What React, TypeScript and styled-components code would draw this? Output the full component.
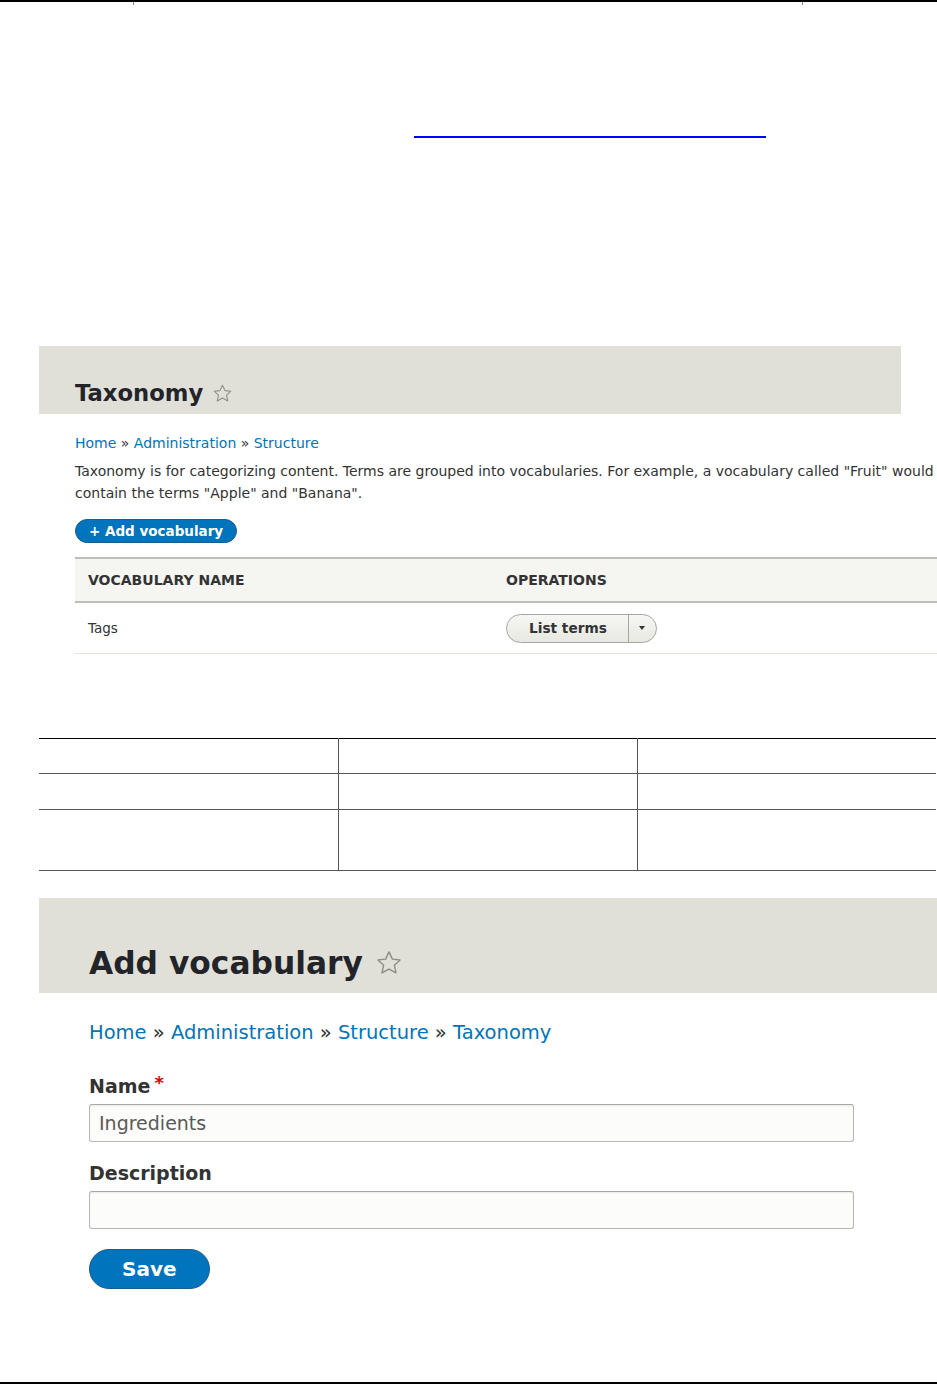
import React from 'react';
import styled, { createGlobalStyle } from 'styled-components';

const GlobalStyle = createGlobalStyle`
  html, body {
    margin: 0;
    padding: 0;
    background: #fff;
    overflow-x: hidden;
  }
  body {
    font-family: "DejaVu Sans", "Liberation Sans", sans-serif;
    color: #333;
  }
`;

const Page = styled.div`
  width: 937px;
  min-height: 1384px;
  display: flex;
  flex-direction: column;
  overflow: hidden;
`;

// leftover header row of the document page
const HeadRule = styled.div`
  display: grid;
  grid-template-columns: 133px 669px 1fr;
  height: 3px;
  border-top: 2px solid #000;
`;

const HeadCell = styled.div<{ $tick?: boolean }>`
  border-left: ${(p) => (p.$tick ? '1px solid #888' : 'none')};
`;

const DocLink = styled.a`
  display: block;
  width: 352px;
  height: 0;
  margin: 131px 0 0 414px;
  border-bottom: 2px solid #0000ff;
`;

// screenshot wrapper
const Shot = styled.section<{ $top: number }>`
  margin-top: ${(p) => p.$top}px;
  margin-left: 39px;
  width: 940px;
`;

const TitleBand = styled.div<{ $big?: boolean }>`
  width: ${(p) => (p.$big ? '898px' : '862px')};
  box-sizing: border-box;
  background: #e0e0d8;
  padding: ${(p) => (p.$big ? '48px 50px 13px' : '34px 36px 8px')};
  display: flex;
  align-items: center;
`;

const Title = styled.h1<{ $big?: boolean }>`
  margin: 0;
  font-size: ${(p) => (p.$big ? '31.3px' : '22.7px')};
  line-height: ${(p) => (p.$big ? '34px' : '26px')};
  font-weight: bold;
  color: #232429;
`;

const Star = ({ size }: { size: number }) => (
  <svg
    width={size}
    height={size}
    viewBox="0 0 24 24"
    fill="none"
    stroke="#8e8e86"
    strokeWidth="1.2"
    strokeLinejoin="round"
    style={{ marginLeft: size * 0.42 }}
  >
    <path d="M12 2.5l2.9 6.2 6.6.7-4.9 4.5 1.4 6.6L12 17.2l-6 3.3 1.4-6.6-4.9-4.5 6.6-.7z" />
  </svg>
);

const Body = styled.div<{ $pad: number }>`
  padding-left: ${(p) => p.$pad}px;
`;

const Crumbs = styled.nav<{ $big?: boolean }>`
  margin-top: ${(p) => (p.$big ? '27px' : '19px')};
  font-size: ${(p) => (p.$big ? '19.5px' : '14px')};
  line-height: ${(p) => (p.$big ? '26px' : '20px')};
  color: #333;
  a {
    color: #0074bd;
    text-decoration: none;
  }
`;

const Help = styled.p`
  margin: 7px 0 0;
  width: 870px;
  font-size: 14px;
  line-height: 22px;
  color: #333;
`;

const ButtonRow = styled.div`
  margin-top: 15px;
`;

const PillButton = styled.button<{ $big?: boolean }>`
  display: inline-flex;
  align-items: center;
  justify-content: center;
  box-sizing: border-box;
  height: ${(p) => (p.$big ? '40px' : '24px')};
  padding: ${(p) => (p.$big ? '0 32px' : '0 13px')};
  border: 1px solid #1e5c90;
  border-radius: 20px;
  background: #0074bd;
  color: #fff;
  font-family: inherit;
  font-weight: bold;
  font-size: ${(p) => (p.$big ? '20px' : '13.5px')};
  cursor: pointer;
`;

const ListTable = styled.table`
  margin-top: 14px;
  width: 900px;
  border-collapse: collapse;
  table-layout: fixed;
  font-size: 14px;
  th {
    box-sizing: border-box;
    background: #f5f5f2;
    border-top: 2px solid #bfbfba;
    border-bottom: 2px solid #bfbfba;
    height: 44px;
    padding: 0 13px;
    text-align: left;
    text-transform: uppercase;
    font-size: 14px;
    color: #333;
  }
  th:first-child {
    width: 418px;
  }
  td {
    height: 50px;
    padding: 0 13px;
    border-bottom: 1px solid #e6e4df;
    color: #333;
  }
  td:first-child {
    font-size: 13.5px;
  }
`;

const SplitButton = styled.div`
  display: inline-flex;
  box-sizing: border-box;
  height: 29px;
  border: 1px solid #a6a6a6;
  border-radius: 15px;
  background: linear-gradient(#f6f6f3, #e8e8e2);
  overflow: hidden;
`;

const SplitMain = styled.span`
  display: flex;
  align-items: center;
  padding: 0 21px 0 22px;
  font-weight: bold;
  font-size: 13.7px;
  color: #333;
  border-right: 1px solid #a6a6a6;
`;

const SplitToggle = styled.span`
  display: flex;
  align-items: center;
  justify-content: center;
  width: 27px;
  &::after {
    content: '';
    border-left: 3.5px solid transparent;
    border-right: 3.5px solid transparent;
    border-top: 4px solid #333;
  }
`;

// empty table on the document page
const BlankGrid = styled.table`
  margin: 84px 0 0 39px;
  width: 897px;
  border-collapse: collapse;
  table-layout: fixed;
  border-top: 1px solid #000;
  td {
    border-bottom: 1px solid #555;
    border-left: 1px solid #555;
    padding: 0;
  }
  td:first-child {
    border-left: none;
  }
`;

const BlankRow = styled.tr<{ $h: number }>`
  height: ${(p) => p.$h}px;
`;

const Field = styled.div<{ $top: number }>`
  margin-top: ${(p) => p.$top}px;
  display: flex;
  flex-direction: column;
`;

const Label = styled.label`
  font-weight: bold;
  font-size: 19px;
  line-height: 24px;
  color: #333;
  span {
    color: #e00;
    margin-left: 4px;
    vertical-align: top;
    font-size: 18px;
    line-height: 18px;
  }
`;

const TextInput = styled.input`
  margin-top: 6px;
  width: 765px;
  height: 38px;
  box-sizing: border-box;
  padding: 0 9px;
  border: 1px solid #b8b8b8;
  border-top-color: #a8a8a8;
  border-radius: 3px;
  background: #fcfcfa;
  box-shadow: inset 0 1px 2px rgba(0, 0, 0, 0.08);
  font-family: inherit;
  font-size: 19px;
  color: #595959;
`;

const Actions = styled.div`
  margin-top: 20px;
`;

const FootRule = styled.div`
  margin-top: auto;
  border-bottom: 2px solid #000;
`;

export default function App() {
  return (
    <Page>
      <GlobalStyle />
      <HeadRule>
        <HeadCell />
        <HeadCell $tick />
        <HeadCell $tick />
      </HeadRule>
      <DocLink href="#" aria-label="link" />

      <Shot $top={208}>
        <TitleBand>
          <Title>Taxonomy</Title>
          <Star size={21} />
        </TitleBand>
        <Body $pad={36}>
          <Crumbs>
            <a href="#">Home</a> » <a href="#">Administration</a> » <a href="#">Structure</a>
          </Crumbs>
          <Help>
            Taxonomy is for categorizing content. Terms are grouped into vocabularies. For example, a
            vocabulary called "Fruit" would contain the terms "Apple" and "Banana".
          </Help>
          <ButtonRow>
            <PillButton>+ Add vocabulary</PillButton>
          </ButtonRow>
          <ListTable>
            <thead>
              <tr>
                <th>Vocabulary name</th>
                <th>Operations</th>
              </tr>
            </thead>
            <tbody>
              <tr>
                <td>Tags</td>
                <td>
                  <SplitButton>
                    <SplitMain>List terms</SplitMain>
                    <SplitToggle />
                  </SplitButton>
                </td>
              </tr>
            </tbody>
          </ListTable>
        </Body>
      </Shot>

      <BlankGrid>
        <tbody>
          {[35, 36, 61].map((h) => (
            <BlankRow key={h} $h={h}>
              <td />
              <td />
              <td />
            </BlankRow>
          ))}
        </tbody>
      </BlankGrid>

      <Shot $top={27}>
        <TitleBand $big>
          <Title $big>Add vocabulary</Title>
          <Star size={28} />
        </TitleBand>
        <Body $pad={50}>
          <Crumbs $big>
            <a href="#">Home</a> » <a href="#">Administration</a> » <a href="#">Structure</a> »{' '}
            <a href="#">Taxonomy</a>
          </Crumbs>
          <Field $top={28}>
            <Label>
              Name<span>*</span>
            </Label>
            <TextInput defaultValue="Ingredients" />
          </Field>
          <Field $top={19}>
            <Label>Description</Label>
            <TextInput />
          </Field>
          <Actions>
            <PillButton $big>Save</PillButton>
          </Actions>
        </Body>
      </Shot>

      <FootRule />
    </Page>
  );
}
